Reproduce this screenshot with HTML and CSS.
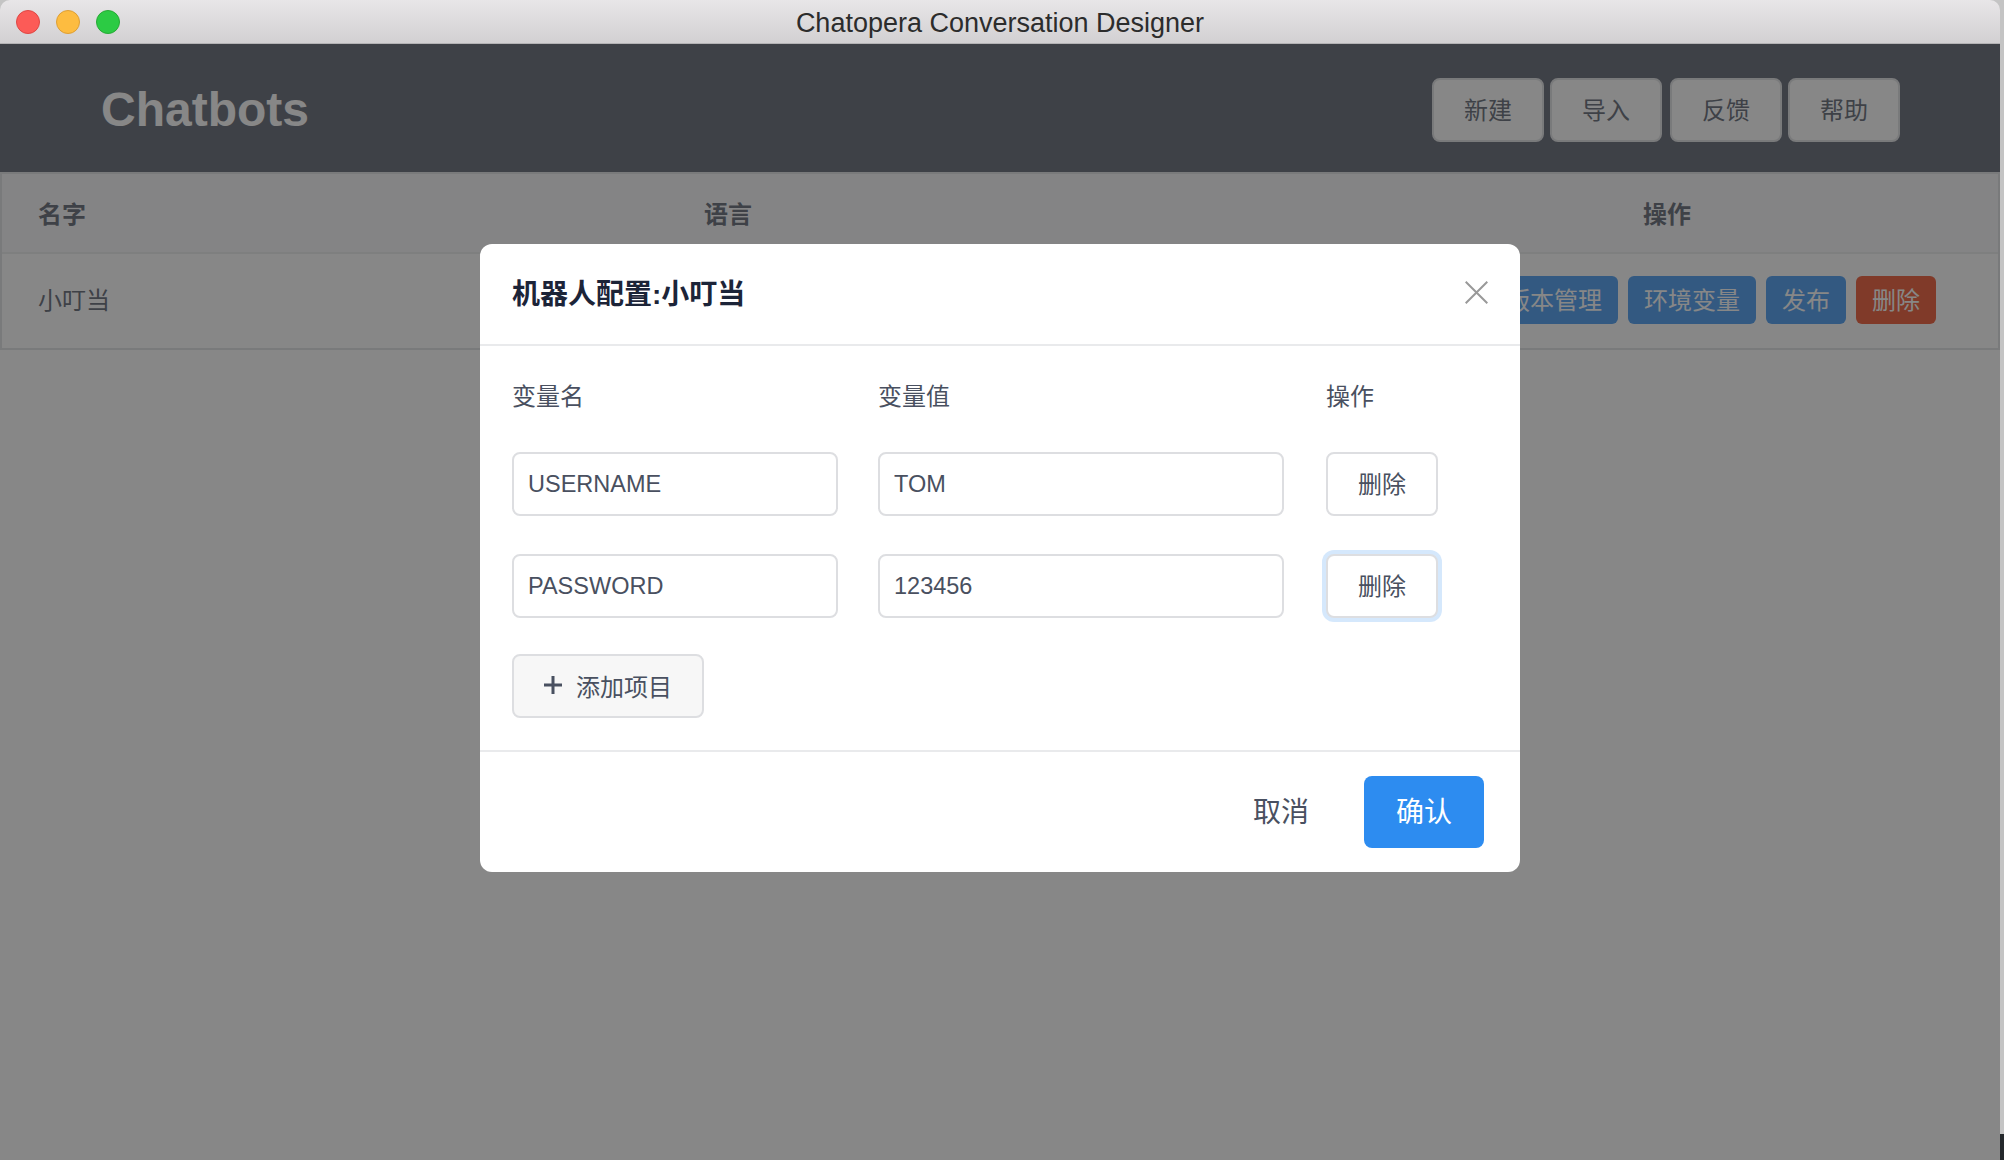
FILE: index.html
```html
<!DOCTYPE html>
<html lang="zh-CN">

<head>
    <meta charset="UTF-8">
    <title>Chatopera Conversation Designer</title>
    <link rel="stylesheet" href="styles.css">
</head>

<body>
    <div class="window">
        <div class="titlebar">
            <div class="lights">
                <span class="light red"></span>
                <span class="light yellow"></span>
                <span class="light green"></span>
            </div>
            <div class="window-title">Chatopera Conversation Designer</div>
        </div>

        <div class="content">
            <div class="topbar">
                <h1>Chatbots</h1>
                <div class="topbar-actions">
                    <button class="btn">新建</button>
                    <button class="btn">导入</button>
                    <button class="btn btn-gap">反馈</button>
                    <button class="btn">帮助</button>
                </div>
            </div>

            <div class="bots">
                <div class="bots-row bots-head">
                    <div>名字</div>
                    <div>语言</div>
                    <div class="ops-head">操作</div>
                </div>
                <div class="bots-row">
                    <div class="bots-name">小叮当</div>
                    <div></div>
                    <div class="ops">
                        <button class="btn-small blue">版本管理</button>
                        <button class="btn-small blue">环境变量</button>
                        <button class="btn-small blue">发布</button>
                        <button class="btn-small red">删除</button>
                    </div>
                </div>
            </div>

            <!-- 遮罩和弹窗 -->
            <div class="mask">
                <div class="modal">
                    <div class="modal-header">
                        <div class="modal-title">机器人配置:小叮当</div>
                        <svg width="23" height="23" viewBox="0 0 23 23">
                            <path d="M0.7 0.7L22.3 22.3M22.3 0.7L0.7 22.3" stroke="#999" stroke-width="2" fill="none" />
                        </svg>
                    </div>
                    <div class="modal-body">
                        <div class="vars">
                            <div class="vars-label">变量名</div>
                            <div class="vars-label">变量值</div>
                            <div class="vars-label">操作</div>

                            <input class="field field-name" type="text" value="USERNAME">
                            <input class="field field-value" type="text" value="TOM">
                            <button class="btn-outline">删除</button>

                            <input class="field field-name" type="text" value="PASSWORD">
                            <input class="field field-value" type="text" value="123456">
                            <button class="btn-outline focused">删除</button>
                        </div>
                        <button class="btn-add">
                            <svg width="18" height="18" viewBox="0 0 18 18">
                                <path d="M9 0V18M0 9H18" stroke="#495060" stroke-width="3" fill="none" />
                            </svg>
                            <span>添加项目</span>
                        </button>
                    </div>
                    <div class="modal-footer">
                        <button class="btn-text">取消</button>
                        <button class="btn-primary">确认</button>
                    </div>
                </div>
            </div>
        </div>
    </div>
    <div class="desktop-corner"></div>
</body>

</html>
```

FILE: styles.css
```css
* {
    box-sizing: border-box;
}

html,
body {
    height: 100%;
}

body {
    margin: 0;
    position: relative;
    background-color: #c4c4c4;
    font-family: "Liberation Sans", "Noto Sans CJK SC", sans-serif;
    font-size: 24px;
    color: #495060;
    overflow: hidden;
}

button {
    font-family: inherit;
    cursor: pointer;
}

.window {
    width: 2000px;
    height: 100%;
    display: flex;
    flex-direction: column;
}

/* canto escuro do desktop */
.desktop-corner {
    position: absolute;
    right: 0;
    bottom: 0;
    width: 4px;
    height: 26px;
    background-color: #24282b;
}

/* Barra da janela */
.titlebar {
    height: 44px;
    flex: none;
    padding-top: 3px;
    display: flex;
    align-items: center;
    justify-content: center;
    position: relative;
    border-radius: 10px 10px 0 0;
    border-bottom: 1px solid #b4b3b5;
    background: linear-gradient(#e8e6e8, #d2d0d2);
}

.window-title {
    font-family: "Liberation Sans", sans-serif;
    font-size: 27px;
    color: #2c2c2c;
}

.lights {
    position: absolute;
    left: 16px;
    top: 10px;
    display: flex;
    gap: 16px;
}

.light {
    width: 24px;
    height: 24px;
    border-radius: 50%;
    border: 1px solid;
}

.red {
    background-color: #fc5b57;
    border-color: #df4744;
}

.yellow {
    background-color: #fdbc40;
    border-color: #de9f34;
}

.green {
    background-color: #2ccb44;
    border-color: #27aa35;
}

.content {
    flex: 1;
    position: relative;
    background-color: white;
}

.topbar {
    height: 128px;
    padding: 4px 100px 0 101px;
    display: flex;
    align-items: center;
    justify-content: space-between;
    background-color: #495060;
}

.topbar h1 {
    margin: 0 0 2px;
    font-size: 48px;
    font-weight: bold;
    color: white;
}

.topbar-actions {
    display: flex;
    gap: 6px;
}

.btn {
    width: 112px;
    height: 64px;
    padding: 0 0 3px;
    font-size: 24px;
    color: #495060;
    background-color: white;
    border: 2px solid #dddee1;
    border-radius: 8px;
}

.btn-gap {
    margin-left: 2px;
}

.bots {
    border: 2px solid #dddee1;
}

.bots-row {
    display: grid;
    grid-template-columns: 666px 730px 600px;
    align-items: center;
    height: 94px;
    padding-bottom: 2px;
}

.bots-row > div {
    padding-left: 36px;
}

.bots-head {
    height: 80px;
    font-weight: bold;
    background-color: #f8f8f9;
    border-bottom: 2px solid #e9eaec;
}

.bots-row > .bots-name {
    padding-bottom: 4px;
}

.bots-row > .ops-head {
    padding: 0 62px 0 0;
    text-align: center;
}

.bots-row > .ops {
    padding: 0 62px 0 0;
    display: flex;
    justify-content: flex-end;
    gap: 10px;
}

.btn-small {
    height: 48px;
    padding: 0 16px 3px;
    font-size: 24px;
    color: white;
    border: none;
    border-radius: 6px;
}

.blue {
    background-color: #2d8cf0;
}

.btn-small.red {
    background-color: #ed3f14;
}

.mask {
    position: absolute;
    inset: 0;
    background-color: rgba(55, 55, 55, 0.6);
}

.modal {
    position: absolute;
    left: 480px;
    top: 200px;
    width: 1040px;
    height: 628px;
    background-color: white;
    border-radius: 12px;
    display: flex;
    flex-direction: column;
}

.modal-header {
    height: 102px;
    flex: none;
    padding: 0 32px 4px;
    display: flex;
    align-items: center;
    justify-content: space-between;
    border-bottom: 2px solid #e9eaec;
}

.modal-title {
    font-size: 28px;
    font-weight: bold;
    color: #1c2438;
}

.modal-body {
    flex: 1;
    padding: 30px 32px 0;
}

.vars {
    display: grid;
    grid-template-columns: 366px 448px 112px;
    grid-template-rows: 38px 64px 64px;
    row-gap: 38px;
    align-items: center;
    margin-bottom: 36px;
}

.vars-label {
    padding-bottom: 2px;
}

.field {
    height: 64px;
    padding: 0 14px;
    font-family: inherit;
    font-size: 23.5px;
    color: #495060;
    border: 2px solid #dddee1;
    border-radius: 8px;
    outline: none;
}

.field-name {
    width: 326px;
}

.field-value {
    width: 406px;
}

.btn-outline {
    width: 112px;
    height: 64px;
    padding: 0 0 4px;
    font-size: 24px;
    color: #495060;
    background-color: white;
    border: 2px solid #dddee1;
    border-radius: 8px;
}

.focused {
    box-shadow: 0 0 0 4px rgba(45, 140, 240, 0.2);
}

.btn-add {
    width: 192px;
    height: 64px;
    padding: 0 0 2px 30px;
    display: flex;
    align-items: center;
    gap: 14px;
    font-size: 24px;
    color: #495060;
    background-color: #f7f7f7;
    border: 2px solid #dddee1;
    border-radius: 8px;
}

.modal-footer {
    height: 122px;
    flex: none;
    padding: 0 36px;
    display: flex;
    align-items: center;
    justify-content: flex-end;
    gap: 39px;
    border-top: 2px solid #e9eaec;
}

.btn-text {
    width: 88px;
    height: 72px;
    padding: 0 0 4px;
    font-size: 28px;
    color: #495060;
    background: none;
    border: none;
}

.btn-primary {
    width: 120px;
    height: 72px;
    padding: 0 0 4px;
    font-size: 28px;
    color: white;
    background-color: #2d8cf0;
    border: none;
    border-radius: 8px;
}
```
